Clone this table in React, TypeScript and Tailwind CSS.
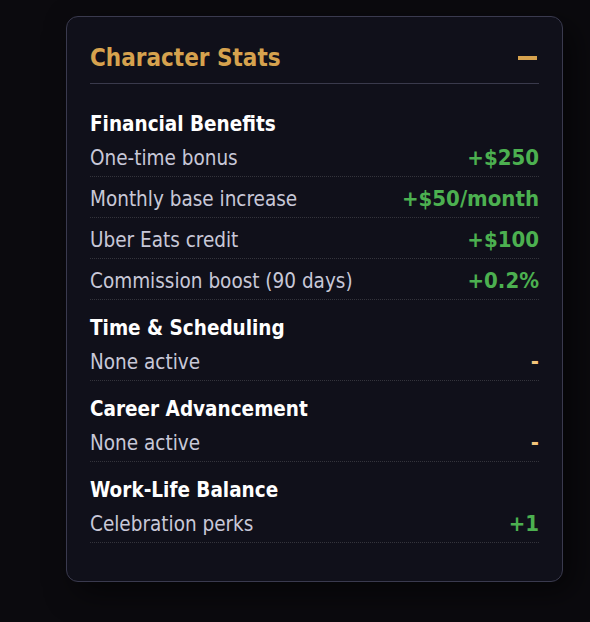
import React from 'react';

type Stat = { label: string; value: string; tone: 'green' | 'none' };
type Section = { title: string; stats: Stat[] };

const sections: Section[] = [
  {
    title: 'Financial Benefits',
    stats: [
      { label: 'One-time bonus', value: '+$250', tone: 'green' },
      { label: 'Monthly base increase', value: '+$50/month', tone: 'green' },
      { label: 'Uber Eats credit', value: '+$100', tone: 'green' },
      { label: 'Commission boost (90 days)', value: '+0.2%', tone: 'green' },
    ],
  },
  {
    title: 'Time & Scheduling',
    stats: [{ label: 'None active', value: '-', tone: 'none' }],
  },
  {
    title: 'Career Advancement',
    stats: [{ label: 'None active', value: '-', tone: 'none' }],
  },
  {
    title: 'Work-Life Balance',
    stats: [{ label: 'Celebration perks', value: '+1', tone: 'green' }],
  },
];

const App: React.FC = () => {
  return (
    <div
      className="min-h-[622px] w-full bg-[#0b0a0e] pt-4 font-stretch-condensed"
      style={{ fontFamily: '"DejaVu Sans Condensed", "DejaVu Sans", sans-serif' }}
    >
      <div className="ml-[66px] w-[497px] rounded-xl border border-[#3a3a4e] bg-[#10101a] px-[23px] pt-[25px] pb-[38px] shadow-[10px_10px_30px_rgba(0,0,0,0.55)]">
        {/* Header */}
        <div className="flex items-center justify-between border-b border-[#3a3a4c] pb-[9px]">
          <h2 className="text-[24px] font-bold leading-8 text-[#d6a24e]">Character Stats</h2>
          <span className="mr-[2px] block h-1 w-[19px] bg-[#d6a24e]" />
        </div>

        {/* Sections */}
        <div className="mt-7 flex flex-col gap-4">
          {sections.map(section => (
            <div key={section.title}>
              <h3 className="text-[20.5px] font-bold leading-6 text-white">{section.title}</h3>
              {section.stats.map(stat => (
                <div
                  key={stat.label}
                  className="flex items-center justify-between border-b border-dotted border-[#34343c] pt-[8px] pb-[4px] text-[20.5px] leading-7"
                >
                  <span className="text-[#c8c8d8]">{stat.label}</span>
                  <span
                    className={
                      stat.tone === 'green'
                        ? 'text-[22px] font-bold text-[#4cb050]'
                        : 'text-[22px] font-bold text-[#f3c47a]'
                    }
                  >
                    {stat.value}
                  </span>
                </div>
              ))}
            </div>
          ))}
        </div>
      </div>
    </div>
  );
};

export default App;
